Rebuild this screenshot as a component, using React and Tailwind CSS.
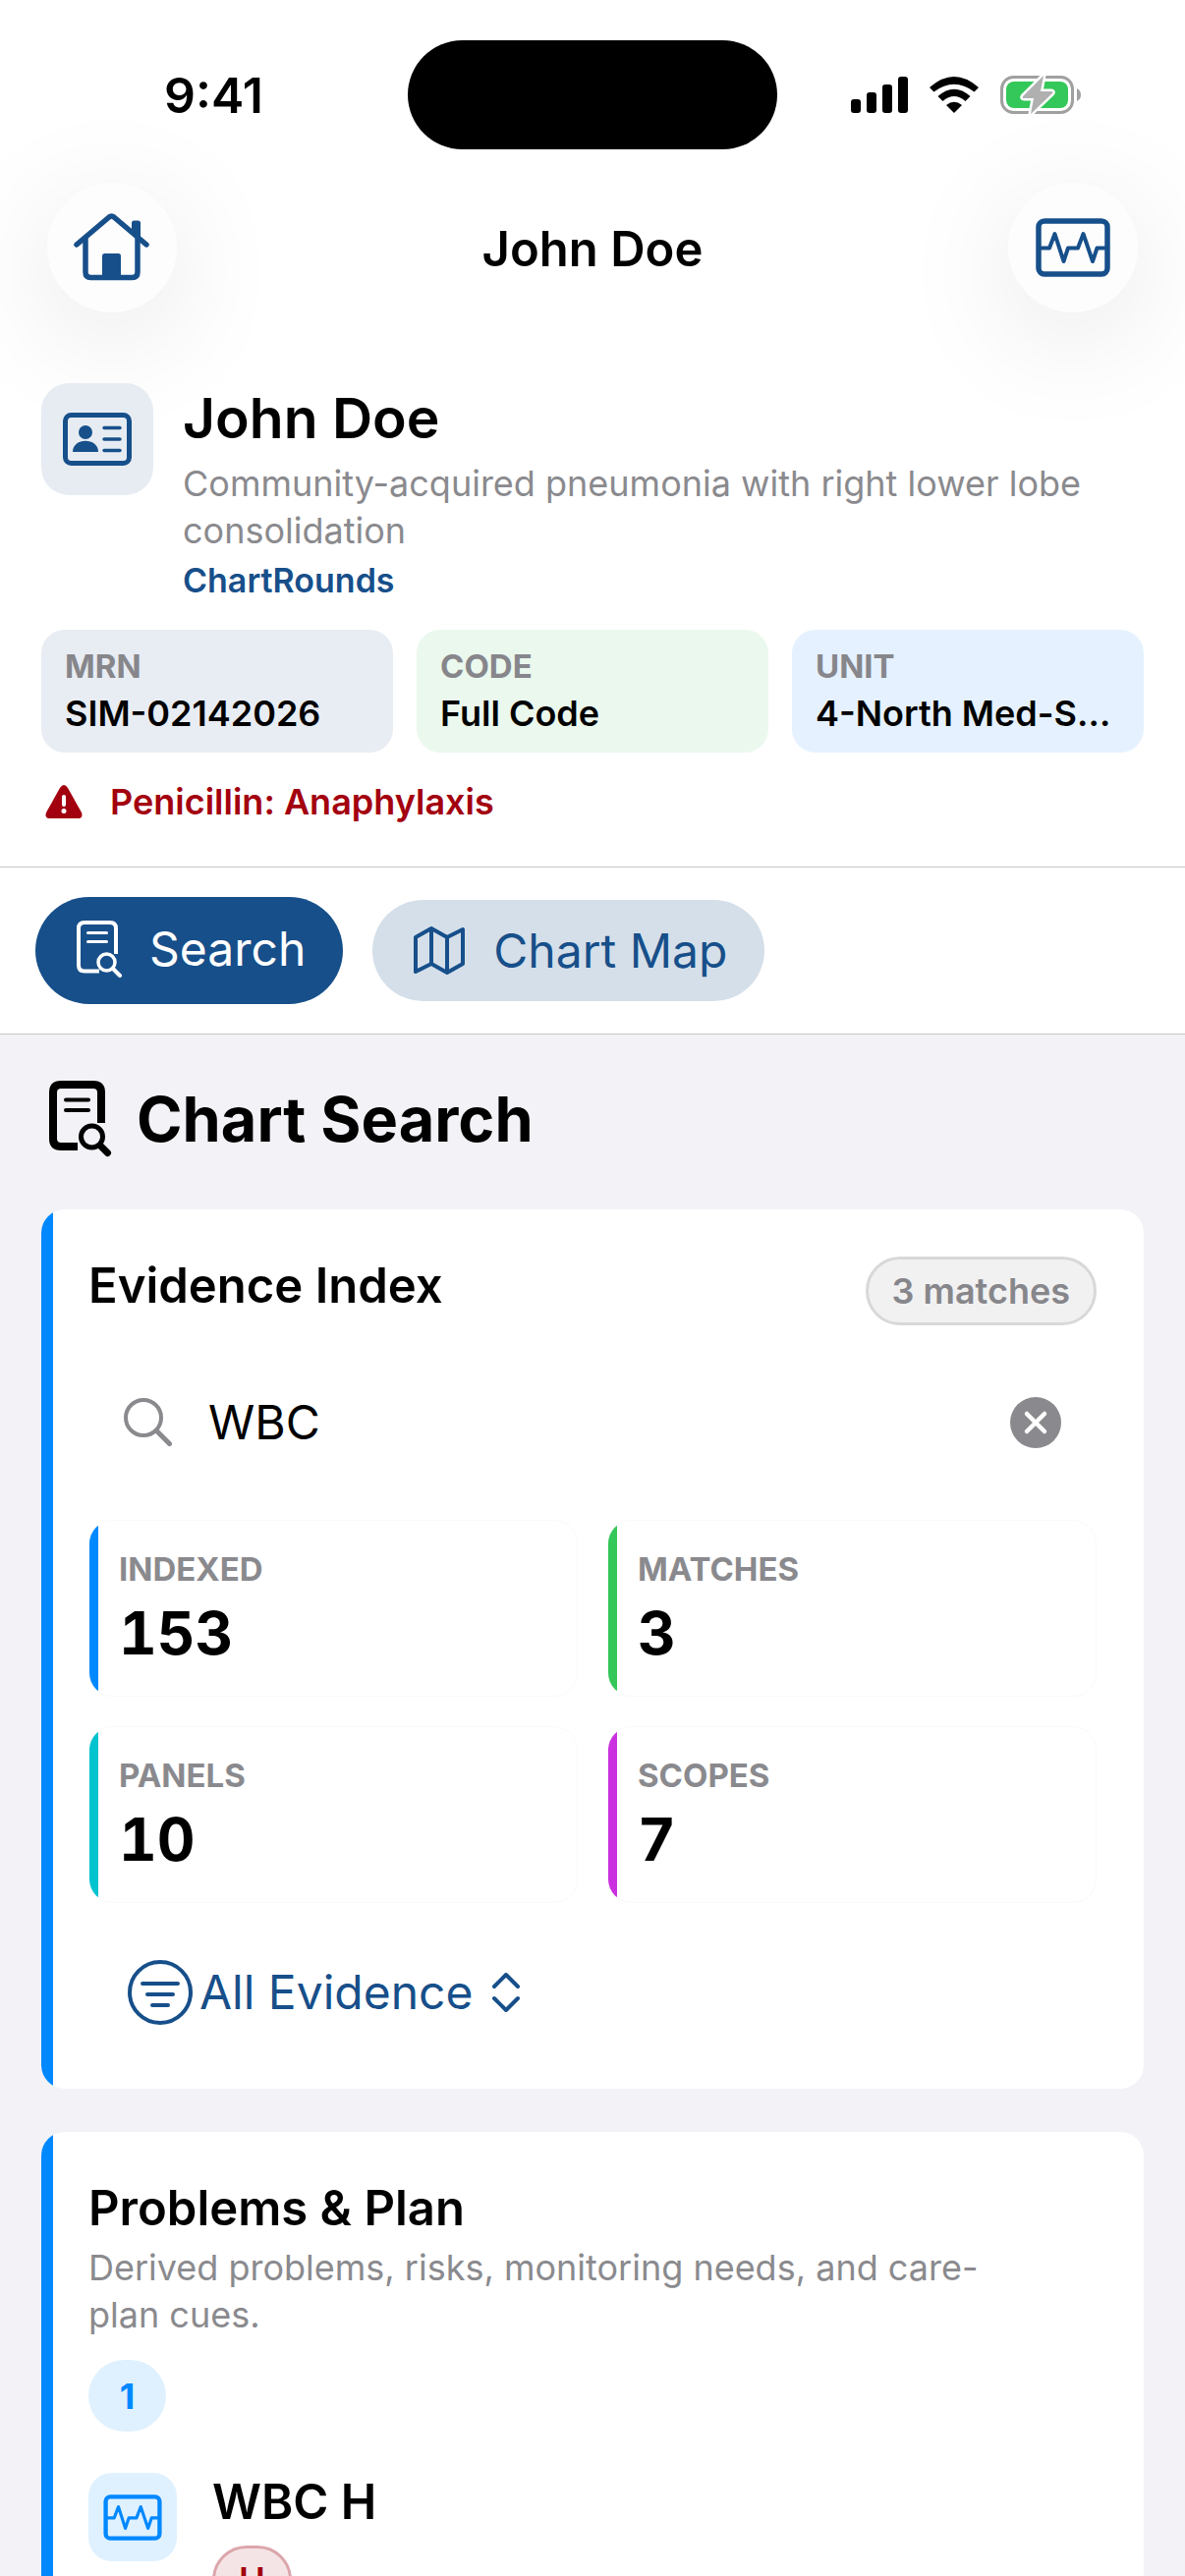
import { useState } from "react"

function HomeIcon({ className }) {
  return (
    <svg viewBox="0 0 78 70" fill="none" stroke="currentColor" strokeWidth="5.5" strokeLinecap="round" strokeLinejoin="round" className={className}>
      <path d="M3 32 L36 4 Q38.5 2 41 4 L74 32" />
      <path d="M12 26 V60 Q12 65.5 17.5 65.5 H59.5 Q65 65.5 65 60 V26" />
      <path d="M59 10 Q59 7.5 61.5 7.5 H65.5 Q68 7.5 68 10 V27 L59 19 Z" fill="currentColor" stroke="none" />
      <path d="M29 66 V43.5 Q29 41 31.5 41 H45.5 Q48 41 48 43.5 V66 Z" fill="currentColor" stroke="none" />
    </svg>
  )
}

function WaveIcon({ className }) {
  return (
    <svg viewBox="0 0 76 60" fill="none" stroke="currentColor" strokeLinejoin="round" className={className}>
      <rect x="3" y="3" width="70" height="54" rx="6" strokeWidth="5.5" />
      <path d="M5 30.5 H14 L19.5 16 L28.5 44 L33 30.5 H43 L48.5 16 L58 44 L62.5 30.5 H71" strokeWidth="4" />
    </svg>
  )
}

function IdCardIcon({ className }) {
  return (
    <svg viewBox="0 0 70 54" fill="none" stroke="currentColor" strokeLinecap="round" className={className}>
      <rect x="2.5" y="2.5" width="65" height="49" rx="6" strokeWidth="5" />
      <circle cx="23" cy="20" r="7" fill="currentColor" stroke="none" />
      <path d="M10 40 C10 25 36 25 36 40 Z" fill="currentColor" stroke="none" />
      <path d="M42 15.5 H58 M42 27 H58 M42 38.5 H58" strokeWidth="3.5" />
    </svg>
  )
}

function WarningIcon({ className }) {
  return (
    <svg viewBox="0 0 38 34" className={className}>
      <path d="M15 3 Q19 -3 23 3 L37 28 Q39 34 33 34 H5 Q-1 34 1 28 Z" fill="currentColor" />
      <path d="M19 12 V20" stroke="white" strokeWidth="4" strokeLinecap="round" />
      <circle cx="19" cy="26.5" r="2.5" fill="white" />
    </svg>
  )
}

function DocSearchIcon({ className }) {
  return (
    <svg viewBox="0 0 47 58" fill="none" stroke="currentColor" strokeWidth="4" className={className}>
      <path d="M40 34 V8 Q40 2 34 2 H8 Q2 2 2 8 V45.5 Q2 51.5 8 51.5 H23" />
      <path d="M11.5 12.5 H30.5 M11.5 21.5 H30.5" strokeWidth="3" strokeLinecap="round" />
      <circle cx="30.5" cy="42.5" r="8.5" strokeWidth="3.5" />
      <path d="M37 49 L44 56" strokeLinecap="round" />
    </svg>
  )
}

function DocSearchBoldIcon({ className }) {
  return (
    <svg viewBox="0 0 64 78" fill="none" stroke="currentColor" strokeWidth="8" className={className}>
      <path d="M53 43 V12 Q53 4 45 4 H12 Q4 4 4 12 V59 Q4 67 12 67 H29" />
      <path d="M17 19.5 H40 M17 30 H40" strokeWidth="4" strokeLinecap="round" />
      <circle cx="43.5" cy="57" r="11" strokeWidth="5" />
      <path d="M52 66 L59.5 73.5" strokeWidth="7" strokeLinecap="round" />
    </svg>
  )
}

function MapIcon({ className }) {
  return (
    <svg viewBox="0 0 52 50" fill="none" stroke="currentColor" strokeWidth="4" strokeLinejoin="round" className={className}>
      <path d="M2 11 L18 2 L34 11 L50 3 V38 L34 47 L18 38 L2 46 Z" />
      <path d="M18 2 V38 M34 11 V47" />
    </svg>
  )
}

function StatusBar() {
  return (
    <div className="grid grid-cols-3 items-center px-4 pt-[41px]">
      <span className="pl-[151px] text-[50px] leading-[60px] font-semibold">9:41</span>
      <div className="h-[111px] w-[376px] justify-self-center rounded-full bg-black" />
      <div className="flex items-center justify-end gap-[22px] pr-[90px]">
        <svg viewBox="0 0 58 37" className="h-[37px] w-[58px]">
          <rect x="0" y="23" width="10" height="14" rx="3" />
          <rect x="16" y="16" width="10" height="21" rx="3" />
          <rect x="32" y="8" width="10" height="29" rx="3" />
          <rect x="48" y="0" width="10" height="37" rx="3" />
        </svg>
        <svg viewBox="0 0 50 37" className="h-[37px] w-[50px]">
          <path d="M0 11 Q25 -11 50 11 L45.5 15.5 Q25 0 4.5 15.5 Z" />
          <path d="M8.5 20 Q25 5.5 41.5 20 L36.5 25 Q25 15 13.5 25 Z" />
          <path d="M17 29 Q25 22.5 33 29 L25 37 Z" />
        </svg>
        <svg viewBox="0 -2 82 43" className="h-[43px] w-[82px]">
          <rect x="1.5" y="1.5" width="72" height="36" rx="12" fill="none" stroke="#a0a0a0" strokeWidth="3" />
          <path d="M78 13 Q82 15 82 19.5 Q82 24 78 26 Z" fill="#a0a0a0" />
          <rect x="6" y="6" width="63" height="27" rx="8" fill="#34c759" />
          <path
            d="M44 0 L23 21 Q22 23 24 23 H34 L31 39 L53 18 Q54 16 52 16 H41 Z"
            fill="#b0b0b0"
            stroke="white"
            strokeWidth="5"
            strokeLinejoin="round"
            paintOrder="stroke"
          />
        </svg>
      </div>
    </div>
  )
}

function NavButton({ label, children }) {
  return (
    <button
      aria-label={label}
      className="flex size-[132px] items-center justify-center rounded-full bg-[#fdfdfd] text-[#174f8a] shadow-[0_24px_120px_rgba(0,0,0,0.10)]"
    >
      {children}
    </button>
  )
}

function InfoTile({ label, value, className }) {
  return (
    <div className={`min-w-0 rounded-[24px] px-6 pt-4 pb-[13px] ${className}`}>
      <div className="text-[33px] leading-[42px] font-bold text-[#86868b]">{label}</div>
      <div className="truncate text-[36px] leading-[54px] font-semibold">{value}</div>
    </div>
  )
}

function StatTile({ label, value, bar }) {
  return (
    <div className="flex overflow-hidden rounded-[24px] border border-[#fafafa] bg-white">
      <div className={`w-[9px] ${bar}`} />
      <div className="px-[21px] pt-7 pb-7">
        <div className="text-[33px] leading-[42px] font-bold text-[#8a8a8e]">{label}</div>
        <div className="pt-2 text-[60px] leading-[72px] font-bold tabular-nums">{value}</div>
      </div>
    </div>
  )
}

function Card({ children }) {
  return (
    <section className="flex shrink-0 overflow-hidden rounded-[24px] bg-white">
      <div className="w-3 shrink-0 bg-[#0088ff]" />
      <div className="min-w-0 flex-1 py-12 pr-12 pl-9">{children}</div>
    </section>
  )
}

const info = [
  { label: "MRN", value: "SIM-02142026", className: "bg-[#e8ecf3]" },
  { label: "CODE", value: "Full Code", className: "bg-[#ebf8ee]" },
  { label: "UNIT", value: "4-North Med-S…", className: "bg-[#e5f1fe]" },
]

const stats = [
  { label: "INDEXED", value: 153, bar: "bg-[#0088ff]" },
  { label: "MATCHES", value: 3, bar: "bg-[#34c759]" },
  { label: "PANELS", value: 10, bar: "bg-[#00c3d0]" },
  { label: "SCOPES", value: 7, bar: "bg-[#cb30e0]" },
]

function App() {
  const [query, setQuery] = useState("WBC")

  return (
    <div className="flex h-screen flex-col overflow-hidden bg-[#f2f2f7] font-['Inter','Liberation_Sans',sans-serif] text-black">
      {/* Patient header */}
      <header className="border-b border-[#c6c6c8] bg-white pb-[42px]">
        <StatusBar />
        <nav className="flex items-center justify-between px-12 pt-[34px]">
          <NavButton label="Home">
            <HomeIcon className="h-[70px] w-[78px]" />
          </NavButton>
          <h1 className="pt-1 text-[49px] leading-[60px] font-semibold">John Doe</h1>
          <NavButton label="Vitals">
            <WaveIcon className="h-[60px] w-[76px]" />
          </NavButton>
        </nav>

        <div className="flex gap-[30px] px-[42px] pt-[72px]">
          <div className="flex size-[114px] shrink-0 items-center justify-center rounded-[28px] bg-[#e7ecf3] text-[#174f8a]">
            <IdCardIcon className="h-[54px] w-[70px]" />
          </div>
          <div className="min-w-0 pr-6">
            <h2 className="text-[57px] leading-[72px] font-semibold">John Doe</h2>
            <p className="pt-[6px] text-[36px] leading-[48px] text-[#8a8a8e]">
              Community-acquired pneumonia with right lower lobe consolidation
            </p>
            <a href="#rounds" className="block pt-[6px] text-[34px] leading-[42px] font-semibold text-[#174f8a]">ChartRounds</a>
          </div>
        </div>

        <div className="grid grid-cols-3 gap-6 px-[42px] pt-[29px]">
          {info.map((item) => (
            <InfoTile key={item.label} {...item} />
          ))}
        </div>

        <div className="flex items-center gap-7 px-[46px] pt-[26px] text-[#a3000f]">
          <WarningIcon className="h-[34px] w-[38px]" />
          <span className="text-[36px] leading-[48px] font-semibold">Penicillin: Anaphylaxis</span>
        </div>
      </header>

      {/* Section switcher */}
      <div className="flex items-center gap-[30px] border-b border-[#c6c6c8] bg-white px-9 py-[30px]">
        <button className="flex h-[109px] items-center gap-[27px] rounded-full bg-[#174f8a] pr-[38px] pb-1 pl-[42px] text-[48px] text-white">
          <DocSearchIcon className="h-[58px] w-[47px]" />
          Search
        </button>
        <button className="flex h-[103px] items-center gap-[29px] rounded-full bg-[#d5dfe9] pr-[38px] pl-[42px] text-[48px] text-[#174f8a]">
          <MapIcon className="h-[50px] w-[52px]" />
          Chart Map
        </button>
      </div>

      <main className="flex min-h-0 flex-1 flex-col gap-[44px] overflow-hidden px-[42px] pt-[46px]">
        <h2 className="flex shrink-0 items-center gap-[25px] pb-2 pl-2 text-[63px] leading-[80px] font-bold">
          <DocSearchBoldIcon className="h-[78px] w-[64px]" />
          Chart Search
        </h2>

        <Card>
          <div className="flex items-start justify-between">
            <h3 className="text-[49px] leading-[60px] font-semibold">Evidence Index</h3>
            <span className="rounded-full border-3 border-[#d8d8d8] bg-[#f1f1f1] px-6 py-2 text-[36px] leading-[48px] font-semibold text-[#86868b]">
              3 matches
            </span>
          </div>

          <div className="flex items-center gap-9 px-9 pt-[69px] pb-[69px]">
            <svg viewBox="0 0 50 50" fill="none" stroke="#8a8a8e" strokeWidth="4" strokeLinecap="round" className="size-[50px] shrink-0">
              <circle cx="20" cy="20" r="18" />
              <path d="M33 33 L46.5 46.5" strokeWidth="5" />
            </svg>
            <input
              aria-label="Search evidence"
              value={query}
              onChange={(e) => setQuery(e.target.value)}
              className="h-[60px] min-w-0 flex-1 text-[48px] leading-[60px] outline-none"
            />
            <button aria-label="Clear search" onClick={() => setQuery("")}>
              <svg viewBox="0 0 52 52" className="size-[52px]">
                <circle cx="26" cy="26" r="26" fill="#8a8a8e" />
                <path d="M17 17 L35 35 M35 17 L17 35" stroke="white" strokeWidth="4.5" strokeLinecap="round" />
              </svg>
            </button>
          </div>

          <div className="grid grid-cols-2 gap-[30px]">
            {stats.map((item) => (
              <StatTile key={item.label} {...item} />
            ))}
          </div>

          <button className="flex items-center pt-[58px] pb-[17px] pl-10 text-[48px] leading-[66px] text-[#174f8a]">
            <svg viewBox="0 0 66 66" fill="none" stroke="currentColor" strokeWidth="4" strokeLinecap="round" className="size-[66px]">
              <circle cx="33" cy="33" r="31" />
              <path d="M15 24 H51 M20 35 H46 M25 46 H41" />
            </svg>
            <span className="pl-[7px]">All Evidence</span>
            <svg viewBox="0 0 28 40" fill="none" stroke="currentColor" strokeWidth="4" strokeLinecap="round" strokeLinejoin="round" className="ml-[20px] h-[40px] w-[28px]">
              <path d="M2 14 L14 2 L26 14 M2 26 L14 38 L26 26" />
            </svg>
          </button>
        </Card>

        <Card>
          <h3 className="text-[49px] leading-[60px] font-semibold">Problems & Plan</h3>
          <p className="pt-[6px] pr-20 text-[36px] leading-[48px] text-[#8a8a8e]">
            Derived problems, risks, monitoring needs, and care-plan cues.
          </p>
          <span className="mt-[22px] flex h-[73px] w-[79px] items-center justify-center rounded-full bg-[#dff1ff] text-[36px] font-bold text-[#0088ff]">
            1
          </span>
          <div className="flex gap-9 pt-[42px]">
            <div className="flex size-[90px] shrink-0 items-center justify-center rounded-[24px] bg-[#dff1ff] text-[#0088ff]">
              <WaveIcon className="h-[47px] w-[60px]" />
            </div>
            <div>
              <h4 className="text-[49px] leading-[60px] font-semibold">WBC H</h4>
              <span className="mt-[14px] block w-fit rounded-full border-3 border-[#dca6ab] bg-[#f5e4e6] px-6 py-2 text-[36px] leading-[48px] font-semibold text-[#a3000f]">
                H
              </span>
            </div>
          </div>
        </Card>
      </main>
    </div>
  )
}

export default App
